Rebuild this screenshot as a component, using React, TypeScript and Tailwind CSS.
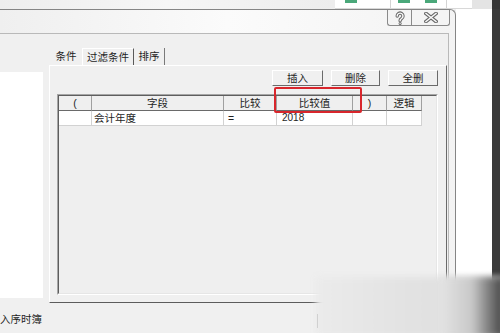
import React from "react";

function HelpIcon() {
  return (
    <svg width="12" height="14" viewBox="0 0 12 14">
      <path d="M3.2 5 a2.9 2.9 0 1 1 4.4 2.5 c-1 .6 -1.5 1.1 -1.5 2.2" fill="none" stroke="#6a6a6a" strokeWidth="3.4" strokeLinecap="round" />
      <path d="M3.2 5 a2.9 2.9 0 1 1 4.4 2.5 c-1 .6 -1.5 1.1 -1.5 2.2" fill="none" stroke="#fafafa" strokeWidth="1.4" strokeLinecap="round" />
      <circle cx="6.1" cy="12.4" r="1.5" fill="#6a6a6a" />
      <circle cx="6.1" cy="12.4" r="0.6" fill="#fafafa" />
    </svg>
  );
}

function CloseIcon() {
  return (
    <svg width="14" height="11" viewBox="0 0 14 11">
      <path d="M2 1.5 L12 9.5 M12 1.5 L2 9.5" stroke="#6a6a6a" strokeWidth="3.6" strokeLinecap="square" />
      <path d="M2 1.5 L12 9.5 M12 1.5 L2 9.5" stroke="#fafafa" strokeWidth="1.5" strokeLinecap="square" />
    </svg>
  );
}

export default function App() {
  return (
    <div className="w-[500px] h-[333px] overflow-hidden relative flex flex-col bg-[#f0f0f0] text-[#1e1e1e] font-['Liberation_Sans','Noto_Sans_CJK_SC',sans-serif]">
      {/* top strip */}
      <div className="h-[9px] flex shrink-0">
        <div className="w-[335px] bg-gradient-to-r from-[#eeeeee] via-[#f6f6f6] to-[#ededed]" />
        <div className="w-[137px] bg-white border-b border-[#d8d8d8] flex items-start">
          <div className="w-[10px]" />
          <div className="w-[12px] h-[3px] bg-[#4aa87a]" />
          <div className="w-[33px]" />
          <div className="w-px h-[8px] bg-[#d4d4d4]" />
          <div className="w-[7px]" />
          <div className="w-[12px] h-[3px] bg-[#4aa87a]" />
          <div className="w-[15px]" />
          <div className="w-[12px] h-[3px] bg-[#4aa87a]" />
          <div className="w-[9px]" />
          <div className="w-px h-[8px] bg-[#d4d4d4]" />
        </div>
        <div className="w-[20px] bg-[#e4e4e4]" />
        <div className="flex-1 bg-[#363636]" />
      </div>

      <div className="flex flex-1 min-h-0">
        {/* dialog */}
        <div className="w-[456px] flex flex-col border-t border-r border-[#858585] rounded-tr-[6px] bg-gradient-to-r from-[#efefef] via-[#fbfbfb] to-[#f3f3f3]">
          {/* title bar */}
          <div className="h-[23px] flex justify-end pr-[5px] shrink-0">
            <div className="flex h-[16px]">
              <div className="w-[24px] border-l border-b border-[#8a8a8a] rounded-bl-[3px] bg-[#f4f4f4] flex items-center justify-center">
                <HelpIcon />
              </div>
              <div className="w-[39px] border-l border-r border-b border-[#8a8a8a] rounded-br-[3px] bg-[#f4f4f4] flex items-center justify-center">
                <CloseIcon />
              </div>
            </div>
          </div>

          {/* client area */}
          <div className="w-[449px] flex-1 flex flex-col border-t border-r border-[#b9b9b9] bg-[#f0f0f0]">
            <div className="flex items-start">
              {/* left white panel */}
              <div className="w-[43px] h-[226px] mt-[38px] bg-white" />
              <div className="w-[6px]" />
              {/* tab control */}
              <div className="w-[398px] mt-[14px] flex flex-col">
                <div className="h-[17px] flex text-[10.5px] leading-none">
                  <div className="w-[1px]" />
                  <div className="w-[32px] flex items-center justify-center">条件</div>
                  <div className="w-[52px] border-l border-t border-r border-l-[#ffffff] border-t-[#ffffff] border-r-[#5a5a5a] flex items-center justify-center">过滤条件</div>
                  <div className="w-[31px] border-r border-[#7a7a7a] flex items-center justify-center">排序</div>
                </div>
                {/* pane */}
                <div className="h-[238px] border-t border-l border-[#ffffff] border-r border-r-[#6a6a6a] border-b border-b-[#5c5c5c] flex flex-col pl-[7px] pr-[8px] pt-[4px]">
                  {/* buttons */}
                  <div className="flex justify-end gap-[8px] text-[10.5px] leading-none">
                    <div className="w-[51px] h-[16px] border border-t-white border-l-white border-r-[#6a6a6a] border-b-[#6a6a6a] bg-[#f0f0f0] flex items-center justify-center">插入</div>
                    <div className="w-[49px] h-[16px] border border-t-white border-l-white border-r-[#6a6a6a] border-b-[#6a6a6a] bg-[#f0f0f0] flex items-center justify-center">删除</div>
                    <div className="w-[50px] h-[16px] border border-t-white border-l-white border-r-[#6a6a6a] border-b-[#6a6a6a] bg-[#f0f0f0] flex items-center justify-center">全删</div>
                  </div>
                  {/* grid */}
                  <div className="relative mt-[8px] h-[201px] border-t border-l border-[#a6a6a6] border-r border-b border-r-white border-b-white">
                    <div className="h-full border-t border-l border-[#5e5e5e] border-r border-b border-r-[#e6e6e6] border-b-[#e6e6e6] bg-[#efefef]">
                      {/* header */}
                      <div className="flex h-[15px] text-[10.5px] leading-none">
                        <div className="w-[33px] border-r border-b border-r-[#a0a0a0] border-b-[#6a6a6a] flex items-center justify-center">(</div>
                        <div className="w-[132px] border-r border-b border-r-[#a0a0a0] border-b-[#6a6a6a] flex items-center justify-center">字段</div>
                        <div className="w-[53px] border-r border-b border-r-[#a0a0a0] border-b-[#6a6a6a] flex items-center justify-center">比较</div>
                        <div className="w-[76px] border-r border-b border-r-[#a0a0a0] border-b-[#6a6a6a] flex items-center justify-center">比较值</div>
                        <div className="w-[34px] border-r border-b border-r-[#a0a0a0] border-b-[#6a6a6a] flex items-center justify-center">)</div>
                        <div className="w-[35px] border-r border-b border-r-[#a0a0a0] border-b-[#6a6a6a] flex items-center justify-center">逻辑</div>
                      </div>
                      {/* data row */}
                      <div className="flex h-[15px] text-[10.5px] leading-none">
                        <div className="w-[33px] bg-white border-r border-b border-[#d2d2d2]" />
                        <div className="w-[132px] bg-white border-r border-b border-[#d2d2d2] flex items-center pl-[2px]">会计年度</div>
                        <div className="w-[53px] bg-white border-r border-b border-[#d2d2d2] flex items-center pl-[4px]">=</div>
                        <div className="w-[76px] bg-white border-r border-b border-[#d2d2d2] flex items-center pl-[5px] text-[10px]">2018</div>
                        <div className="w-[34px] bg-white border-r border-b border-[#d2d2d2]" />
                        <div className="w-[35px] bg-white border-r border-b border-[#d2d2d2]" />
                      </div>
                    </div>
                    {/* red highlight */}
                    <div className="absolute left-[216px] top-[-8px] w-[88px] h-[26px] border-2 border-[#d8262c] rounded-[2px]" />
                  </div>
                </div>
              </div>
            </div>
            {/* status */}
            <div className="flex-1 flex items-center text-[10.5px] leading-none">
              <div className="ml-0 mt-[2px]">入序时簿</div>
              <div className="ml-[275px] w-px h-[14px] bg-[#9a9a9a] mt-[6px]" />
            </div>
          </div>
        </div>
        <div className="w-[36px] bg-white" />
        <div className="flex-1 bg-[#3a3a3a]" />
      </div>

      {/* watermark blur overlay */}
      <div className="absolute left-[316px] top-[277px] w-[190px] h-[60px] blur-[3px] bg-gradient-to-r from-[#ebebeb] via-[#e2e2e2] to-[#dedede]" />
      <div className="absolute left-[440px] top-[277px] w-[65px] h-[60px] blur-[3px] bg-gradient-to-r from-[#e4e4e4] via-[#c8c8c8] to-[#3e3e3e]" />
    </div>
  );
}
